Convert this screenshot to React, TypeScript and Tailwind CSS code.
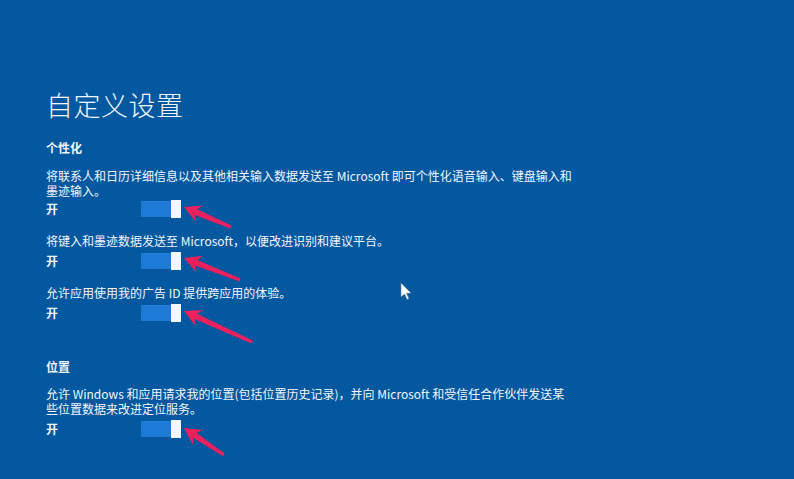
import React from 'react'

const font = { fontFamily: '"Noto Sans CJK SC", "Noto Sans", sans-serif' }

// 红色标注箭头：tip 为箭头尖，tail 为尾部
const arrows = [
  { tip: [184, 207], tail: [231, 227] },
  { tip: [184, 258], tail: [240, 280] },
  { tip: [184, 311], tail: [252, 342] },
  { tip: [184, 428], tail: [224, 455] },
]

function arrowPoints(t: number[], e: number[]) {
  const dx = e[0] - t[0]
  const dy = e[1] - t[1]
  const len = Math.hypot(dx, dy)
  const ux = dx / len
  const uy = dy / len
  const nx = -uy
  const ny = ux
  const head = 17
  const half = 9
  const near = 3
  const far = 1.5
  const p = (a: number, b: number) => `${(t[0] + ux * a + nx * b).toFixed(1)},${(t[1] + uy * a + ny * b).toFixed(1)}`
  return [
    p(0, 0),
    p(head, half),
    p(head - 4, near),
    `${(e[0] + nx * far).toFixed(1)},${(e[1] + ny * far).toFixed(1)}`,
    `${(e[0] - nx * far).toFixed(1)},${(e[1] - ny * far).toFixed(1)}`,
    p(head - 4, -near),
    p(head, -half),
  ].join(' ')
}

const Toggle = () => (
  <div className="flex items-center">
    <div className="h-[16px] w-[30px] bg-[#1d7bd6]" />
    <div className="h-[18px] w-[10px] bg-[#f4f8fc]" />
  </div>
)

const OnRow = ({ className = '' }: { className?: string }) => (
  <div className={`flex h-[17px] items-center ${className}`}>
    <span className="w-[95px] text-[12px] font-bold leading-[14px]">开</span>
    <Toggle />
  </div>
)

const App = (): React.ReactElement => {
  return (
    <div className="relative h-[479px] w-[794px] overflow-hidden bg-[#03589f] text-[#f2f6fb]" style={font}>
      <div className="flex flex-col pl-[46px] pt-[87px]">
        <h1 className="text-[27px] font-light leading-[36px] tracking-[0.5px]">自定义设置</h1>

        <h2 className="mt-[17px] text-[12px] font-bold leading-[16px]">个性化</h2>
        <p className="mt-[12px] text-[12px] leading-[15px]">
          将联系人和日历详细信息以及其他相关输入数据发送至 Microsoft 即可个性化语音输入、键盘输入和
          <br />
          墨迹输入。
        </p>
        <OnRow className="mt-[2px]" />

        <p className="mt-[17px] text-[12px] leading-[14px]">将键入和墨迹数据发送至 Microsoft，以便改进识别和建议平台。</p>
        <OnRow className="mt-[4px]" />

        <p className="mt-[17px] text-[12px] leading-[14px]">允许应用使用我的广告 ID 提供跨应用的体验。</p>
        <OnRow className="mt-[4px]" />

        <h2 className="mt-[38px] text-[12px] font-bold leading-[16px]">位置</h2>
        <p className="mt-[11px] text-[12px] leading-[15px]">
          允许 Windows 和应用请求我的位置(包括位置历史记录)，并向 Microsoft 和受信任合作伙伴发送某
          <br />
          些位置数据来改进定位服务。
        </p>
        <OnRow className="mt-[4px]" />
      </div>

      {/* 标注与鼠标指针 */}
      <svg className="pointer-events-none absolute left-0 top-0" width="794" height="479">
        {arrows.map((a, i) => (
          <polygon key={i} points={arrowPoints(a.tip, a.tail)} fill="#ec205c" />
        ))}
        <polygon points="401,283 401,297 404.5,294 407,299.5 409,298.5 406.5,293.2 411,293" fill="#ffffff" stroke="#6b7f99" strokeWidth="0.6" />
      </svg>
    </div>
  )
}

export default App
